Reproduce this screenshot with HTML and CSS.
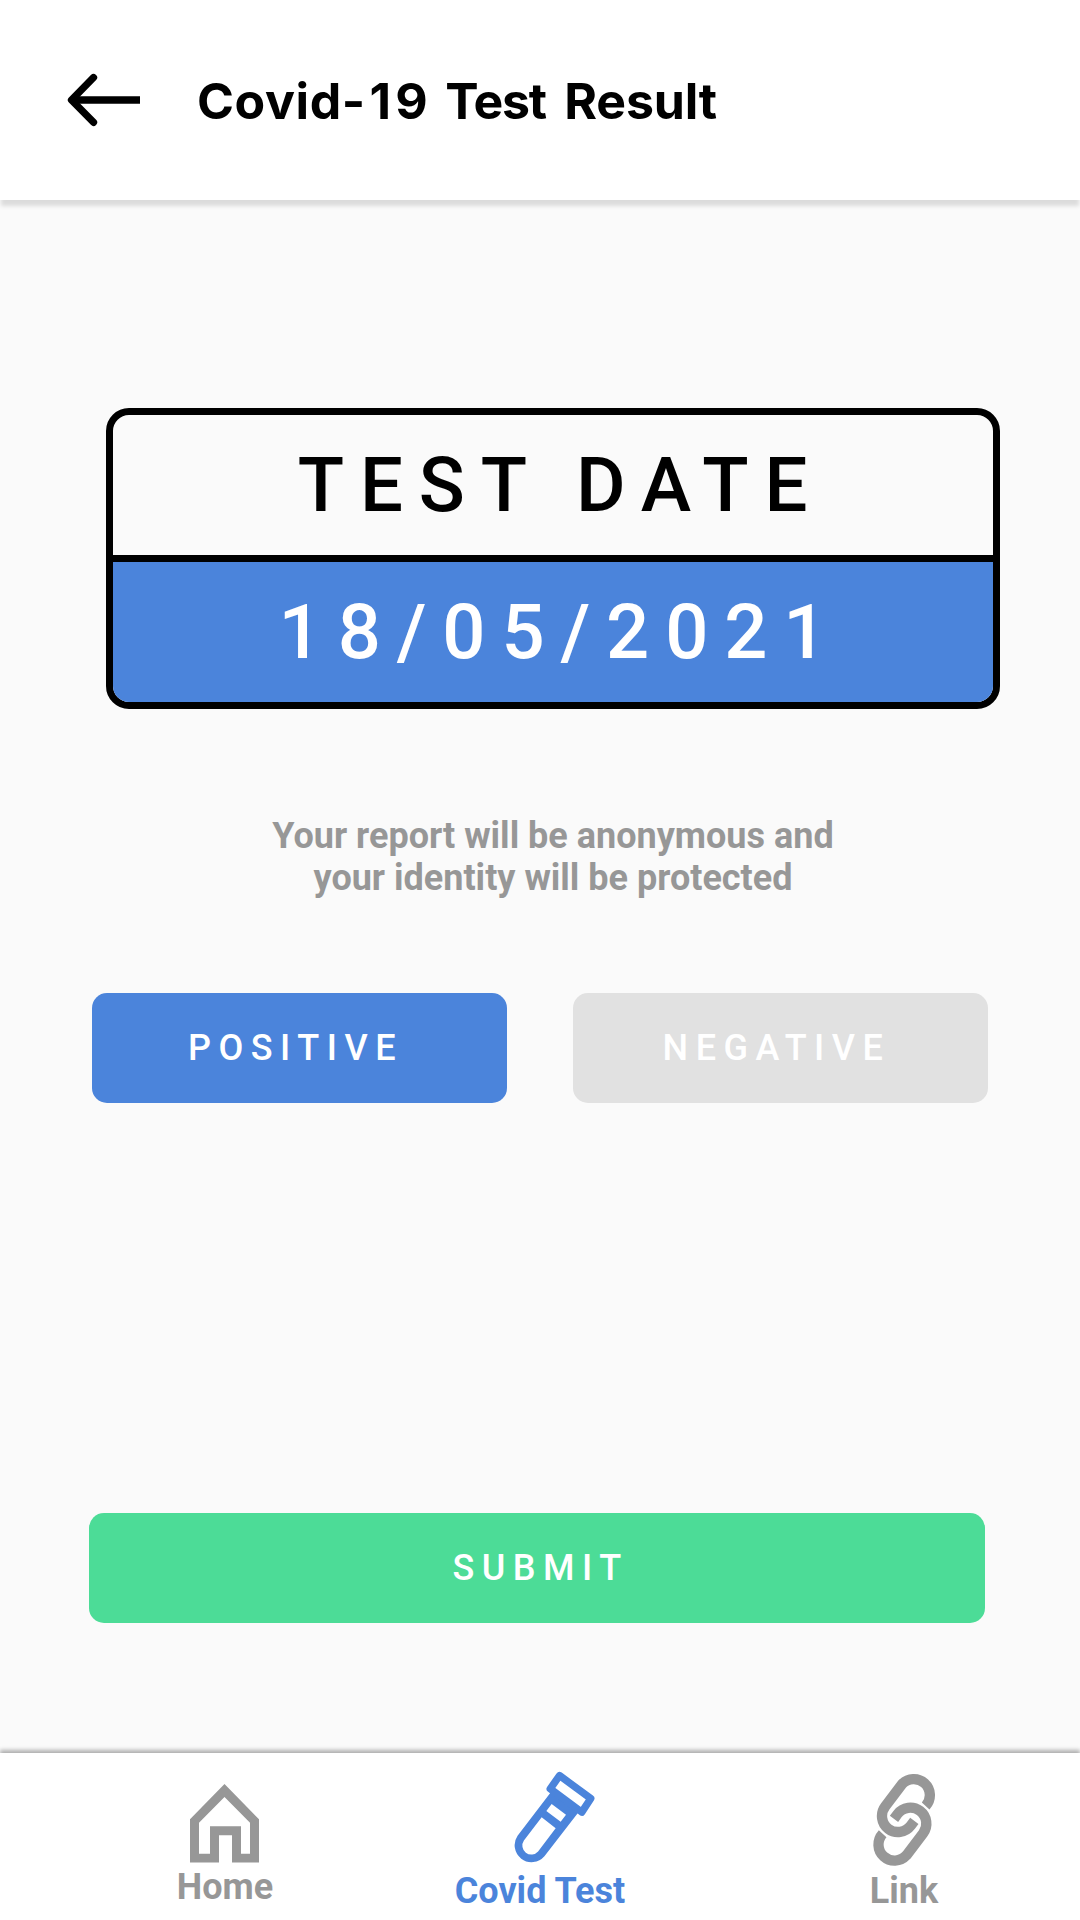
FILE: index.html
```html
<!DOCTYPE html>
<html lang="en">
<head>
<meta charset="utf-8">
<title>Covid-19 Test Result</title>
<link rel="stylesheet" href="styles.css">
</head>
<body>
<div class="screen">
  <header class="header">
    <svg class="back" viewBox="0 0 74 54" aria-label="Back">
      <path d="M73 27H6" />
      <path class="back-head" d="M26.5 4.5L4.5 27L26.5 49.3" />
    </svg>
    <h1 class="title"><span class="word-covid">Covid</span><span class="word-number">-19</span> <span class="word-test">Test</span> <span class="word-result">Result</span></h1>
  </header>
  <main class="content">
    <section class="date-card">
      <div class="date-label">TEST DATE</div>
      <div class="date-value">18/05/2021</div>
    </section>
    <p class="note">Your report will be anonymous and<br>your identity will be protected</p>
    <div class="choices">
      <button class="button positive">POSITIVE</button>
      <button class="button negative">NEGATIVE</button>
    </div>
    <button class="button submit">SUBMIT</button>
  </main>
  <nav class="tabs">
    <a class="tab home">
      <svg class="icon-home" viewBox="120 162 207 236">
        <path fill-rule="evenodd" d="M223.5 162L327 268V397.500H246V316H207V397.500H120V268ZM223.500 201L147 278V371H180V289H273V371H300V278Z"/>
      </svg>
      <span>Home</span>
    </a>
    <a class="tab test">
      <svg class="icon-test" viewBox="216 120 252 285">
        <path d="M337 181L232.700 316.900A51 51 0 0 0 313.300 379.100L420 241Z"/>
        <path class="cap" d="M358.600 136.700L452.300 205.500L425.400 246.400L330.600 176.400Z"/>
        <path class="hole" d="M335 222L378 254L362 275L319 243ZM305 262L347 295L294.300 364.500A27 27 0 0 1 251.700 331.500Z"/>
      </svg>
      <span>Covid Test</span>
    </a>
    <a class="tab link">
      <svg class="icon-link" viewBox="156 126 195 288">
        <path d="M317 228A48 48 0 1 0 245.700 163L195.700 229A48 48 0 0 0 272.300 287L283 272.600"/>
        <path d="M188 311A48 48 0 1 0 259.300 376L309.300 310A48 48 0 0 0 232.700 252L222 266.400"/>
      </svg>
      <span>Link</span>
    </a>
  </nav>
</div>
</body>
</html>
```
FILE: styles.css
```css
* {
  box-sizing: border-box;
}

body {
  margin: 0;
  font-family: Roboto, "Liberation Sans", sans-serif;
}

.screen {
  width: 1080px;
  height: 1920px;
  display: flex;
  flex-direction: column;
  background: #fafafa;
}

.header {
  height: 200px;
  display: flex;
  align-items: center;
  padding-left: 67px;
  background: #fff;
  box-shadow: 0 7px 4px -1px rgba(0, 0, 0, 0.12);
}

.back {
  width: 74px;
  height: 54px;
  fill: none;
  stroke: #000;
  stroke-width: 7.3;
}

.back-head {
  stroke-linecap: round;
  stroke-linejoin: round;
}

.title {
  margin: 2px 0 0 56px;
  font: 700 50px/60px Inter, sans-serif;
  word-spacing: 1.5px;
  white-space: nowrap;
}

.word-covid {
  letter-spacing: 0.6px;
}

.word-number {
  letter-spacing: 4.2px;
}

.word-test {
  letter-spacing: -1.2px;
}

.word-result {
  margin-left: 5px;
  letter-spacing: -0.2px;
}

.content {
  flex: 1;
  display: flex;
  flex-direction: column;
  padding-top: 208px;
}

.date-card {
  width: 894px;
  margin-left: 106px;
  border: 7px solid #000;
  border-radius: 23px;
  overflow: hidden;
  font-size: 76px;
  font-weight: 500;
  line-height: 140px;
  letter-spacing: 15.9px;
  text-align: center;
}

.date-label {
  padding-left: 15px;
  border-bottom: 7px solid #000;
}

.date-value {
  padding-left: 15px;
  color: #fff;
  background: #4b84db;
}

.note {
  width: 894px;
  margin: 106px 0 0 106px;
  color: #979797;
  font-size: 36px;
  font-weight: 700;
  line-height: 42px;
  text-align: center;
}

.choices {
  display: flex;
  gap: 66px;
  margin: 94px 0 0 92px;
}

.button {
  height: 110px;
  padding: 0;
  border: 0;
  border-radius: 15px;
  color: #fff;
  font: 500 36px/110px Roboto, sans-serif;
  letter-spacing: 7.5px;
}

.positive,
.negative {
  width: 415px;
  padding-right: 8px;
}

.positive {
  background: #4b84db;
}

.negative {
  background: #e1e1e1;
}

.submit {
  width: 896px;
  margin: 410px 0 0 89px;
  padding-left: 7px;
  background: #4cdc97;
}

.tabs {
  height: 167px;
  display: grid;
  grid-template-columns: 450px 180px 180px;
  background: #fff;
  box-shadow: 0 -3px 4px rgba(0, 0, 0, 0.3);
}

.tab {
  display: flex;
  flex-direction: column;
  align-items: center;
  color: #979797;
  font-size: 36px;
  font-weight: 700;
  line-height: 42px;
  white-space: nowrap;
}

.tab svg {
  fill: currentColor;
}

.test {
  color: #4b84db;
}

.link {
  margin: 0 -184px 0 184px;
}

.icon-home {
  width: 69px;
  height: 78.7px;
  margin: 31px 1px 3px 0;
}

.icon-test {
  width: 84px;
  height: 95px;
  margin: 17px 0 5px 27px;
}

.tab .cap {
  stroke: currentColor;
  stroke-width: 22;
  stroke-linejoin: round;
  fill: #fff;
}

.tab .hole {
  fill: #fff;
}

.tab .icon-link {
  width: 65px;
  height: 96px;
  margin: 19px 0 2px;
  fill: none;
  stroke: currentColor;
  stroke-width: 31;
}
```
